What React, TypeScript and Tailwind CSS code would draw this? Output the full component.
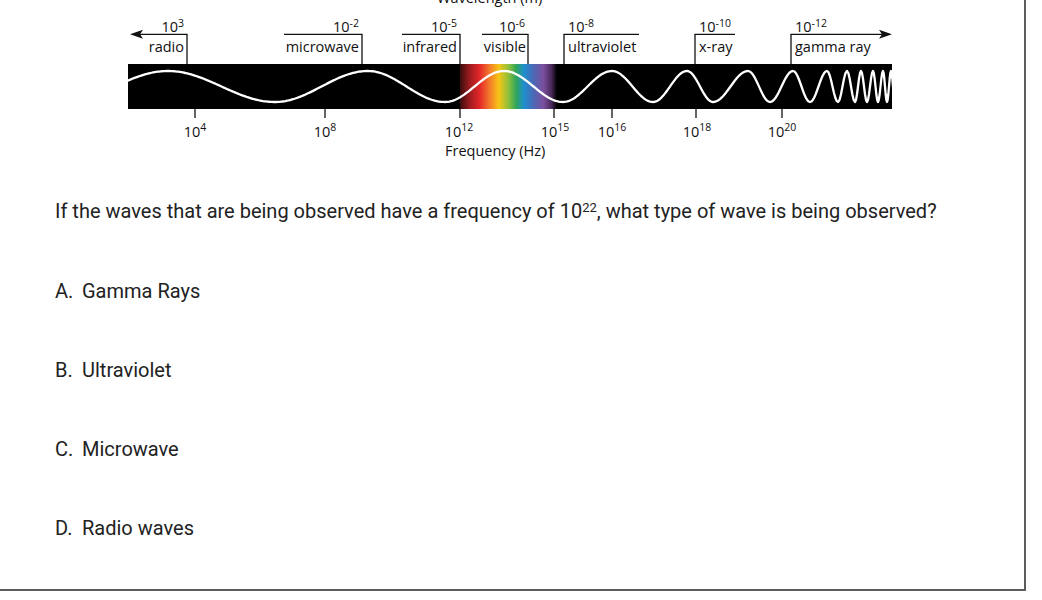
import React from "react";

const TOP = 71;
const BOT = 102;
const XS = [61, 168, 275, 368, 445, 504, 563, 612, 653, 687, 713, 748, 770, 793, 810, 827, 838, 847, 855, 861, 867, 873, 878, 883, 887, 891, 895];

function buildWave(): string {
  let d = "";
  for (let i = 0; i < XS.length - 1; i++) {
    const x0 = XS[i];
    const x1 = XS[i + 1];
    const y0 = i % 2 === 0 ? BOT : TOP;
    const y1 = i % 2 === 0 ? TOP : BOT;
    const n = Math.max(6, Math.ceil((x1 - x0) / 1.5));
    for (let k = i === 0 ? 0 : 1; k <= n; k++) {
      const t = k / n;
      const x = x0 + (x1 - x0) * t;
      const y = y0 + (y1 - y0) * (1 - Math.cos(Math.PI * t)) / 2;
      d += (i === 0 && k === 0 ? "M" : "L") + x.toFixed(2) + "," + y.toFixed(2) + " ";
    }
  }
  return d;
}

const FONT = "'Open Sans', 'Noto Sans', sans-serif";

function Exp({ x, y, base, exp, anchor, size = 14.5 }: { x: number; y: number; base: string; exp: string; anchor: "start" | "end" | "middle"; size?: number }) {
  return (
    <text x={x} y={y} textAnchor={anchor} fontSize={size} fill="#111" fontFamily={FONT}>
      {base}
      <tspan dy={-5.5} fontSize={10.5}>
        {exp}
      </tspan>
    </text>
  );
}

function Label({ x, y, text, anchor }: { x: number; y: number; text: string; anchor: "start" | "end" | "middle" }) {
  return (
    <text x={x} y={y} textAnchor={anchor} fontSize={14.5} fill="#111" fontFamily={FONT}>
      {text}
    </text>
  );
}

function Spectrum() {
  const wave = buildWave();
  const sw = 1.3;
  const hy = 34.3;
  return (
    <svg width="900" height="165" viewBox="0 0 900 165" className="block">
      <defs>
        <clipPath id="barclip">
          <rect x="128" y="64" width="764" height="45" />
        </clipPath>
        <linearGradient id="spec" x1="460" x2="557" y1="0" y2="0" gradientUnits="userSpaceOnUse">
          <stop offset="0" stopColor="#3a0d0d" />
          <stop offset="0.1" stopColor="#9e1c1f" />
          <stop offset="0.2" stopColor="#e2262a" />
          <stop offset="0.3" stopColor="#f3762b" />
          <stop offset="0.4" stopColor="#f6c515" />
          <stop offset="0.5" stopColor="#8fc03c" />
          <stop offset="0.58" stopColor="#2fa55a" />
          <stop offset="0.66" stopColor="#1f8fcf" />
          <stop offset="0.76" stopColor="#4d67b5" />
          <stop offset="0.86" stopColor="#7c4f9e" />
          <stop offset="0.94" stopColor="#4a2a5e" />
          <stop offset="1" stopColor="#000" />
        </linearGradient>
      </defs>

      <text x={437} y={3} fontSize={14.5} fill="#111" fontFamily={FONT}>
        Wavelength (m)
      </text>

      {/* bar */}
      <rect x="128" y="64" width="764" height="45" fill="#000" />
      <rect x="460" y="64" width="97" height="45" fill="url(#spec)" />
      <path d={wave} fill="none" stroke="#fff" strokeWidth={2.3} clipPath="url(#barclip)" strokeLinejoin="round" />

      {/* brackets */}
      <g stroke="#111" strokeWidth={sw} fill="none">
        <line x1="138" y1={hy} x2="187.5" y2={hy} />
        <line x1="187" y1={hy} x2="187" y2="64" />
        <line x1="284" y1={hy} x2="362.5" y2={hy} />
        <line x1="362" y1={hy} x2="362" y2="64" />
        <line x1="402" y1={hy} x2="460.5" y2={hy} />
        <line x1="460" y1={hy} x2="460" y2="64" />
        <line x1="482" y1={hy} x2="528.5" y2={hy} />
        <line x1="528" y1={hy} x2="528" y2="64" />
        <line x1="563.5" y1={hy} x2="639" y2={hy} />
        <line x1="564" y1={hy} x2="564" y2="64" />
        <line x1="694.5" y1={hy} x2="735" y2={hy} />
        <line x1="695" y1={hy} x2="695" y2="64" />
        <line x1="790.5" y1={hy} x2="884" y2={hy} />
        <line x1="791" y1={hy} x2="791" y2="64" />
        {/* bottom ticks */}
        <line x1="195" y1="109" x2="195" y2="118" />
        <line x1="325" y1="109" x2="325" y2="118" />
        <line x1="460" y1="109" x2="460" y2="118" />
        <line x1="554" y1="109" x2="554" y2="118" />
        <line x1="612" y1="109" x2="612" y2="118" />
        <line x1="696" y1="109" x2="696" y2="118" />
        <line x1="782" y1="109" x2="782" y2="118" />
      </g>
      <path d="M130,34.3 L143,29.8 L140,34.3 L143,38.8 Z" fill="#111" />
      <path d="M892,34.3 L879,29.8 L882,34.3 L879,38.8 Z" fill="#111" />

      {/* top labels */}
      <Exp x={184} y={32} base="10" exp="3" anchor="end" />
      <Label x={184} y={51.5} text="radio" anchor="end" />
      <Exp x={359} y={32} base="10" exp="-2" anchor="end" />
      <Label x={359} y={51.5} text="microwave" anchor="end" />
      <Exp x={457} y={32} base="10" exp="-5" anchor="end" />
      <Label x={457} y={51.5} text="infrared" anchor="end" />
      <Exp x={525} y={32} base="10" exp="-6" anchor="end" />
      <Label x={526} y={51.5} text="visible" anchor="end" />
      <Exp x={568} y={32} base="10" exp="-8" anchor="start" />
      <Label x={568} y={51.5} text="ultraviolet" anchor="start" />
      <Exp x={699} y={32} base="10" exp="-10" anchor="start" />
      <Label x={699} y={51.5} text="x-ray" anchor="start" />
      <Exp x={795} y={32} base="10" exp="-12" anchor="start" />
      <Label x={795} y={51.5} text="gamma ray" anchor="start" />

      {/* bottom labels */}
      <Exp x={195} y={136.5} base="10" exp="4" anchor="middle" />
      <Exp x={325} y={136.5} base="10" exp="8" anchor="middle" />
      <Exp x={459} y={136.5} base="10" exp="12" anchor="middle" />
      <Exp x={555} y={136.5} base="10" exp="15" anchor="middle" />
      <Exp x={612} y={136.5} base="10" exp="16" anchor="middle" />
      <Exp x={697} y={136.5} base="10" exp="18" anchor="middle" />
      <Exp x={782} y={136.5} base="10" exp="20" anchor="middle" />
      <text x={445} y={156} fontSize={14.5} fill="#111" fontFamily={FONT}>
        Frequency (Hz)
      </text>
    </svg>
  );
}

const OPTIONS = [
  ["A.", "Gamma Rays"],
  ["B.", "Ultraviolet"],
  ["C.", "Microwave"],
  ["D.", "Radio waves"],
];

export default function App() {
  return (
    <div className="w-[1026px] h-[591px] bg-white border-r-2 border-b-2 border-[#5c5c5c] box-border overflow-hidden">
      <Spectrum />
      <div className="pl-[55px] mt-[34px] font-['Roboto',sans-serif] text-[20px] leading-[24px] text-[#222222]">
        <p>
          If the waves that are being observed have a frequency of 10<sup className="text-[13px]">22</sup>, what type of wave is being observed?
        </p>
        <div className="mt-[56px] flex flex-col gap-[55px]">
          {OPTIONS.map(([k, v]) => (
            <div key={k} className="flex">
              <span className="w-[27px]">{k}</span>
              <span>{v}</span>
            </div>
          ))}
        </div>
      </div>
    </div>
  );
}
